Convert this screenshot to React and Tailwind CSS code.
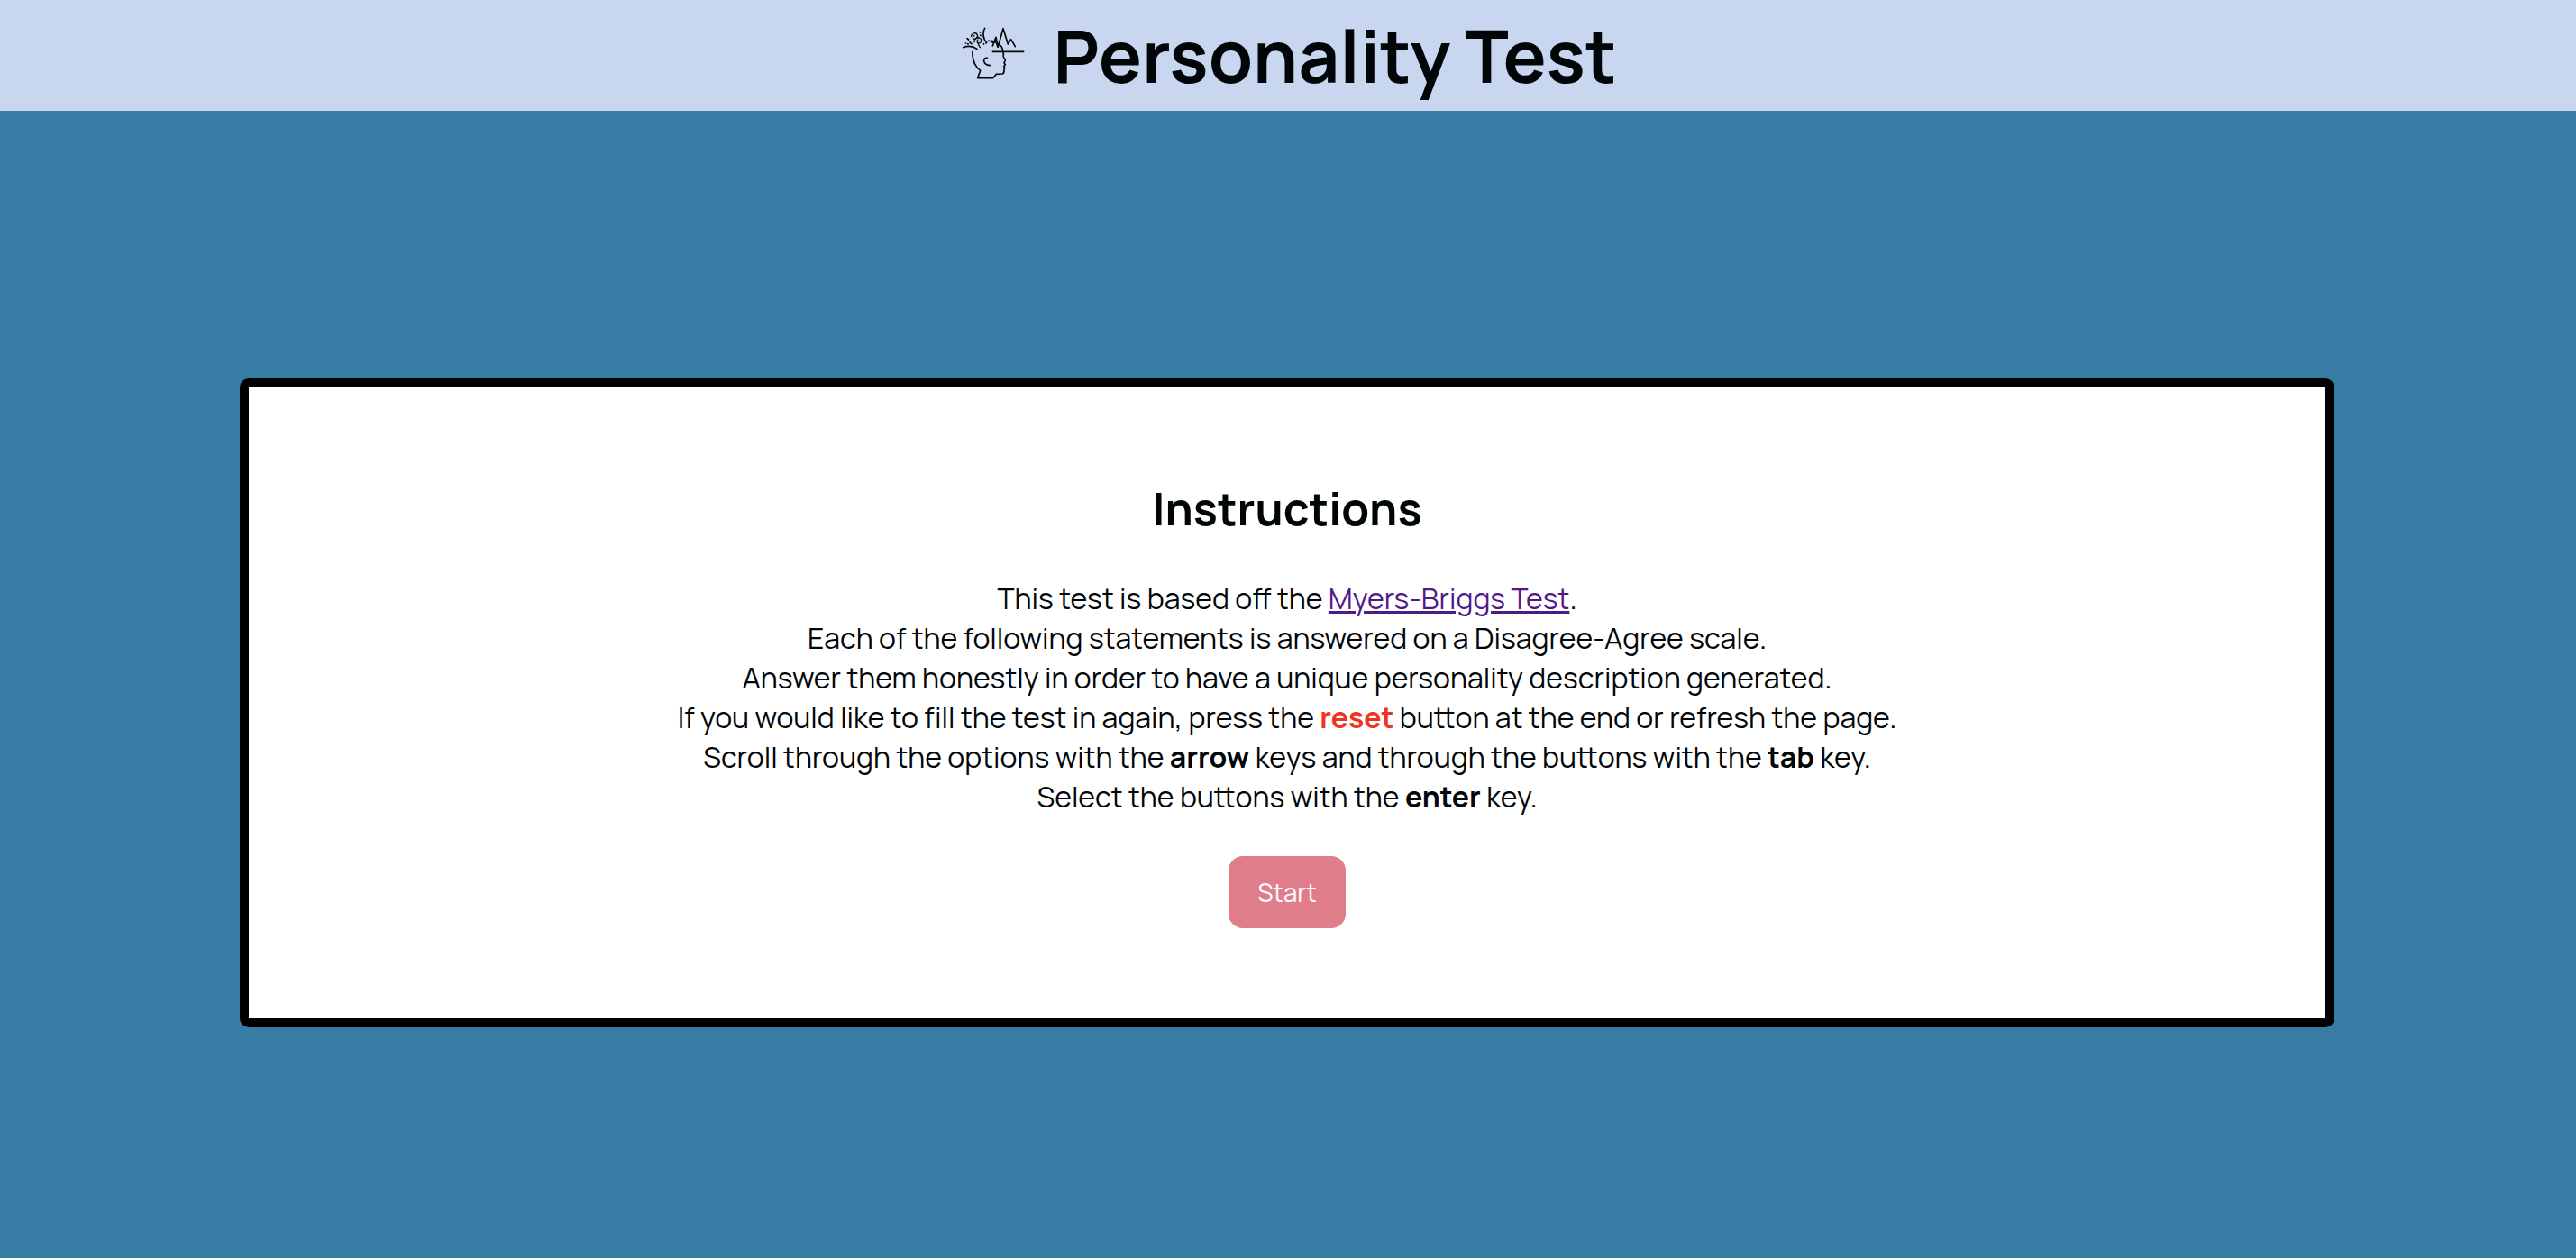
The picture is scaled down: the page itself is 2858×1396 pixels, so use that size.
function HeadLogo() {
  return (
    <svg
      className="mb-1 h-16 w-19 shrink-0"
      viewBox="42 36 228 192"
      fill="none"
      stroke="#000508"
      strokeWidth="5"
      strokeLinecap="round"
      strokeLinejoin="round"
      aria-hidden="true"
    >
      <path d="M87 124c-1 14 2 29 7 40 5 10 11 18 19 23l-9 25h51l11-13 20-1c7-1 6-8 6-14l2-6-3-5 5-6-4-6 4-8c1-4-3-6-5-9-3-4-2-8-1-12-1-10-3-16-5-22-2-6-7-7-11-10" />
      <path d="M154 124h103" />
      <path d="M139 88c6-1 10 1 15 5" />
      <path d="M154 105l11-29 7 32 17-61 16 52 10-16 14 24" />
      <path d="M166 94l5 15M152 88l12 5" />
      <path d="M56 110c16-6 32-5 46 5" />
      <path d="M128 46c-7 11-6 26-1 38 1 3 3 5 5 7" />
      <path d="M136 145c-7-1-12 3-11 10 1 8 9 14 20 15" />
      <g strokeWidth="4">
        <path d="M82 73c2-10 14-14 20-7 5 7-2 16-10 16-6-1-6-10 1-11" />
        <path d="M93 92c-2-9 8-17 17-14 9 4 8 16-1 18-7 1-9-7-4-12M105 95c1 6 3 10 7 15" />
      </g>
      <path d="M69 80l5 4M78 93l6 5M64 96h1M71 98l2 1M111 59l1 1M113 69l1 1M124 98l1 1M132 96l2-2" />
    </svg>
  );
}

export default function App() {
  return (
    <div className="flex min-h-screen flex-col bg-[#377ca5] font-['Manrope','Inter',sans-serif] text-[#000508]">
      <header className="flex items-center justify-center gap-7 bg-[#c8d6ef] py-1.5">
        <HeadLogo />
        <h1 className="text-[80px] leading-[111px] font-bold">Personality Test</h1>
      </header>
      <main className="flex flex-1 items-center justify-center pt-10 pr-[268px] pl-[266px]">
        <section className="flex w-full flex-col items-center rounded-[10px] border-10 border-black bg-white px-10 py-25 text-center">
          <h2 className="text-[50px] leading-[68px] font-bold">Instructions</h2>
          <p className="mt-11 text-[32px] leading-[44px]">
            This test is based off the{" "}
            <a href="#myers-briggs" className="text-[#4f1a87] underline decoration-3 underline-offset-2">
              Myers-Briggs Test
            </a>
            .
            <br />
            Each of the following statements is answered on a Disagree-Agree scale.
            <br />
            Answer them honestly in order to have a unique personality description generated.
            <br />
            If you would like to fill the test in again, press the{" "}
            <strong className="font-bold text-[#ee3524]">reset</strong> button at the end or refresh the page.
            <br />
            Scroll through the options with the <strong className="font-bold">arrow</strong> keys and through the
            buttons with the <strong className="font-bold">tab</strong> key.
            <br />
            Select the buttons with the <strong className="font-bold">enter</strong> key.
          </p>
          <button type="button" className="mt-11 h-20 rounded-2xl bg-[#df7e8a] px-8 text-[28px] text-white">
            Start
          </button>
        </section>
      </main>
    </div>
  );
}
